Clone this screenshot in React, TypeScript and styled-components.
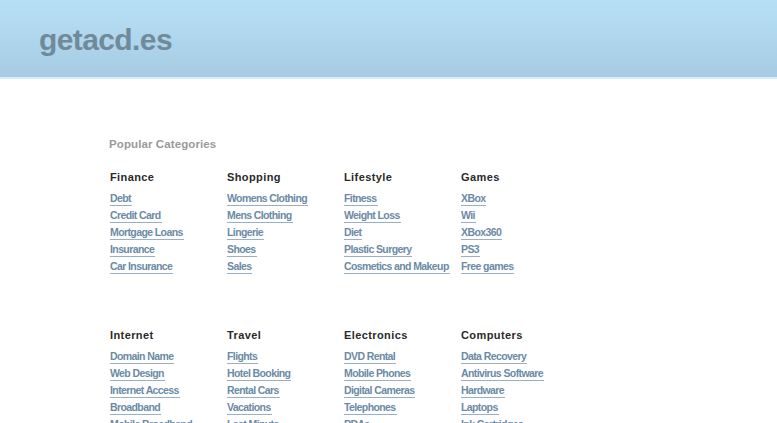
import React from 'react';
import styled, { createGlobalStyle } from 'styled-components';

const GlobalStyle = createGlobalStyle`
  html, body {
    margin: 0;
    padding: 0;
    background: #ffffff;
    font-family: "Liberation Sans", Arial, sans-serif;
    overflow: hidden;
  }
`;

const TopBar = styled.header`
  height: 77px;
  background: linear-gradient(to bottom, #b7dff4 0%, #afd6ee 50%, #a6cbe3 100%);
  border-bottom: 2px solid #d8ecf7;
  display: flex;
  align-items: center;
  padding-left: 39px;
`;

const Logo = styled.div`
  font-size: 30px;
  font-weight: bold;
  color: #718a9a;
  letter-spacing: -0.6px;
  margin-top: 2px;
`;

const Main = styled.main`
  padding: 59px 0 0 109px;
`;

const PageTitle = styled.h1`
  margin: 0 0 19px 0;
  font-size: 11.5px;
  font-weight: bold;
  color: #9a9a9a;
  letter-spacing: 0.1px;
`;

const Block = styled.section`
  display: grid;
  grid-template-columns: repeat(4, 117px);
  padding-left: 1px;
  margin-bottom: 50px;
`;

const Column = styled.div`
  display: flex;
  flex-direction: column;
  align-items: flex-start;
`;

const ColumnTitle = styled.h2`
  margin: 0 0 7px 0;
  font-size: 11px;
  line-height: 16px;
  font-weight: bold;
  color: #2a2a2a;
  letter-spacing: 0.4px;
`;

const Link = styled.a`
  font-size: 10.5px;
  line-height: 13px;
  font-weight: bold;
  color: #6b8aa6;
  text-decoration: none;
  white-space: nowrap;
  border-bottom: 1px solid #98b0c4;
  padding-right: 1px;
  margin-bottom: 3px;
  letter-spacing: -0.6px;
`;

const groups = [
  [
    { title: 'Finance', links: ['Debt', 'Credit Card', 'Mortgage Loans', 'Insurance', 'Car Insurance'] },
    { title: 'Shopping', links: ['Womens Clothing', 'Mens Clothing', 'Lingerie', 'Shoes', 'Sales'] },
    { title: 'Lifestyle', links: ['Fitness', 'Weight Loss', 'Diet', 'Plastic Surgery', 'Cosmetics and Makeup'] },
    { title: 'Games', links: ['XBox', 'Wii', 'XBox360', 'PS3', 'Free games'] },
  ],
  [
    { title: 'Internet', links: ['Domain Name', 'Web Design', 'Internet Access', 'Broadband', 'Mobile Broadband'] },
    { title: 'Travel', links: ['Flights', 'Hotel Booking', 'Rental Cars', 'Vacations', 'Last Minute'] },
    { title: 'Electronics', links: ['DVD Rental', 'Mobile Phones', 'Digital Cameras', 'Telephones', 'PDAs'] },
    { title: 'Computers', links: ['Data Recovery', 'Antivirus Software', 'Hardware', 'Laptops', 'Ink Cartridges'] },
  ],
];

export default function App() {
  return (
    <>
      <GlobalStyle />
      <TopBar>
        <Logo>getacd.es</Logo>
      </TopBar>
      <Main>
        <PageTitle>Popular Categories</PageTitle>
        {groups.map((group, i) => (
          <Block key={i}>
            {group.map((col) => (
              <Column key={col.title}>
                <ColumnTitle>{col.title}</ColumnTitle>
                {col.links.map((l) => (
                  <Link key={l} href="#">{l}</Link>
                ))}
              </Column>
            ))}
          </Block>
        ))}
      </Main>
    </>
  );
}
